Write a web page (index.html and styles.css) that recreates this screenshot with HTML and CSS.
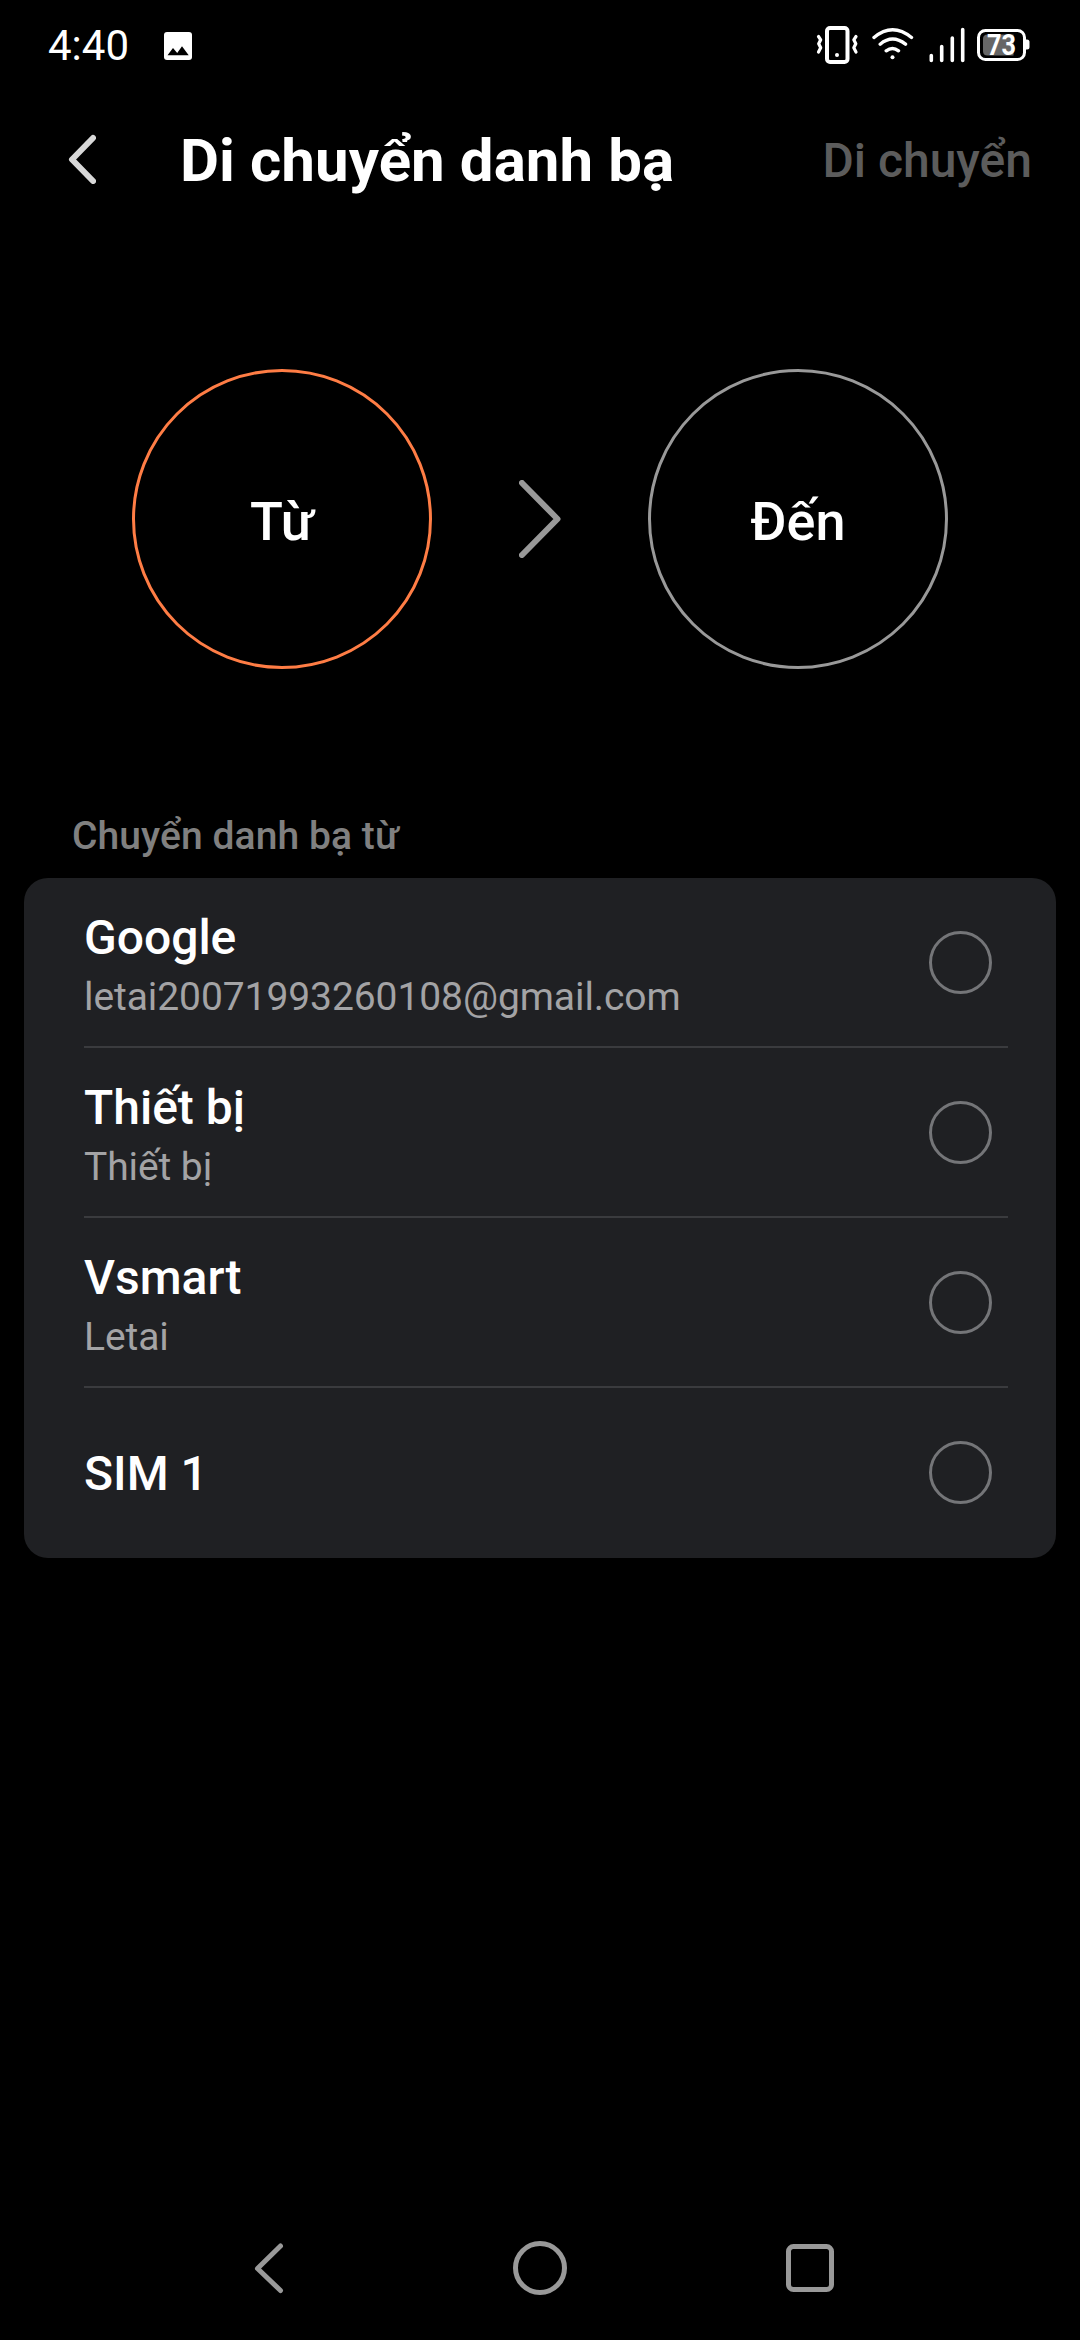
FILE: index.html
```html
<!DOCTYPE html>
<html lang="vi">
<head>
<meta charset="utf-8">
<title>Di chuyển danh bạ</title>
<link rel="stylesheet" href="styles.css">
</head>
<body>
<div class="screen">
  <div class="status">
    <span class="time">4:40</span>
    <svg class="photo" width="28" height="28" viewBox="0 0 28 28"><rect width="28" height="28" rx="3" fill="#fff"/><path d="M3.500 23.200 9 16l4.200 4.900L18 14.200l6.700 9z" fill="#000"/></svg>
    <svg class="indicators" width="220" height="50" viewBox="812 20 220 50" fill="none" stroke="#fff" stroke-linecap="round" stroke-linejoin="round">
      <rect x="827" y="28" width="20.500" height="34" rx="3" stroke-width="4"/>
      <circle cx="837" cy="55" r="2" fill="#fff" stroke="none"/>
      <path d="M818.500 36.500l2.200 3.300-2 4 2 4-2.200 4.200M856 36.500l-2.200 3.300 2 4-2 4 2.200 4.200" stroke-width="3.200"/>
      <path d="M874 37.500Q892.500 22 911.500 37.500M880.200 44.200Q892.500 34 905.500 44.200M886.200 50.800Q892.500 46 898.500 50.800" stroke-width="3.400"/>
      <circle cx="892.500" cy="57.300" r="2" fill="#fff" stroke="none"/>
      <path d="M931.300 55.500V60.500M941.700 46.500V60.500M952.300 38V60.500M962.700 29.500V60.500" stroke-width="3.600"/>
      <path d="M987.500 34.500H1013.500V55.500H987.500Q983 55.500 983 51V39Q983 34.500 987.500 34.500z" fill="#666" stroke="none"/>
      <rect x="978.500" y="30.500" width="46" height="29" rx="7" stroke-width="3"/>
      <path d="M1026 39.500h1q2.500 0 2.500 2.500v5q0 2.500-2.500 2.500h-1z" fill="#fff" stroke="none"/>
      <text class="level" x="987" y="55.300" textLength="29" lengthAdjust="spacingAndGlyphs">73</text>
    </svg>
  </div>
  <header class="header">
    <svg class="back" width="30" height="50" viewBox="0 0 30 50"><path d="M27 4 6 25.500 27 47" fill="none" stroke="#d8d8d8" stroke-width="6" stroke-linecap="round" stroke-linejoin="round"/></svg>
    <h1 class="title">Di chuyển danh bạ</h1>
    <span class="action">Di chuyển</span>
  </header>
  <section class="transfer">
    <div class="node node-active">Từ</div>
    <svg class="arrow" width="42" height="78" viewBox="0 0 42 78"><path d="M3 3 38.500 39 3 75" fill="none" stroke="#999" stroke-width="6" stroke-linecap="round" stroke-linejoin="round"/></svg>
    <div class="node">Đến</div>
  </section>
  <h2 class="label">Chuyển danh bạ từ</h2>
  <ul class="card">
    <li class="row"><div class="texts"><div class="name">Google</div><div class="sub">letai20071993260108@gmail.com</div></div><span class="radio"></span></li>
    <li class="row"><div class="texts"><div class="name">Thiết bị</div><div class="sub">Thiết bị</div></div><span class="radio"></span></li>
    <li class="row"><div class="texts"><div class="name">Vsmart</div><div class="sub">Letai</div></div><span class="radio"></span></li>
    <li class="row"><div class="texts"><div class="name">SIM 1</div></div><span class="radio"></span></li>
  </ul>
  <nav class="nav">
    <svg width="54" height="54" viewBox="0 0 54 54"><path d="M37.500 5 14.500 27.500 37.500 49.500" /></svg>
    <svg width="54" height="54" viewBox="0 0 54 54"><circle cx="27" cy="27" r="24.500"/></svg>
    <svg width="54" height="54" viewBox="0 0 54 54"><rect x="5.500" y="5.500" width="43" height="43" rx="5"/></svg>
  </nav>
</div>
</body>
</html>
```

FILE: styles.css
```css
* { box-sizing: border-box; }
body { margin: 0; background: #000; font-family: Roboto, "Noto Sans", sans-serif; color: #fff; }
.screen { width: 1080px; height: 2340px; display: flex; flex-direction: column; overflow: hidden; }
.status { height: 93px; display: flex; align-items: center; padding: 0 48px; }
.time { font-size: 42px; line-height: 50px; margin-top: -1px; }
.photo { margin-left: 35px; margin-top: -2px; }
.indicators { margin-left: auto; margin-top: -3px; }
.level { font: 700 30px Roboto, sans-serif; fill: #fff; stroke: none; }
.header { height: 136px; display: flex; align-items: center; padding: 0 48px 0 66px; }
.back { margin-top: -4px; }
.title { margin: 0 0 0 84px; font-size: 60px; line-height: 72px; font-weight: 700; letter-spacing: 0.08px; }
.action { margin-left: auto; font-size: 48px; line-height: 58px; font-weight: 500; color: #5c5c5c; }
.transfer { display: flex; align-items: center; justify-content: center; gap: 87px; padding-top: 140px; }
.node { width: 300px; height: 300px; border: 3px solid #999; border-radius: 50%; display: flex; align-items: center; justify-content: center; padding-top: 5px; font-size: 54px; font-weight: 500; }
.node-active { border-color: #ff7d45; }
.label { margin: 137px 0 12px 72px; font-size: 39px; line-height: 60px; font-weight: 500; letter-spacing: 0.08px; color: #808080; }
.card { list-style: none; margin: 0 24px; padding: 0 48px 0 60px; background: #1f2023; border-radius: 24px; }
.row { height: 170px; display: flex; align-items: center; justify-content: space-between; padding-right: 16px; border-bottom: 2px solid #3a3b3e; }
.row:last-child { border-bottom-color: transparent; }
.texts { padding-top: 5px; }
.row:last-child .texts { padding-top: 4px; }
.name { font-size: 48px; line-height: 64px; font-weight: 500; }
.sub { font-size: 39px; line-height: 54px; letter-spacing: -0.08px; color: #a3a3a5; }
.radio { width: 63px; height: 63px; border: 3px solid #747578; border-radius: 50%; }
.nav { margin-top: auto; height: 144px; display: flex; align-items: center; justify-content: center; gap: 216px; }
.nav svg { fill: none; stroke: #999; stroke-width: 5; stroke-linecap: round; stroke-linejoin: round; }
```
